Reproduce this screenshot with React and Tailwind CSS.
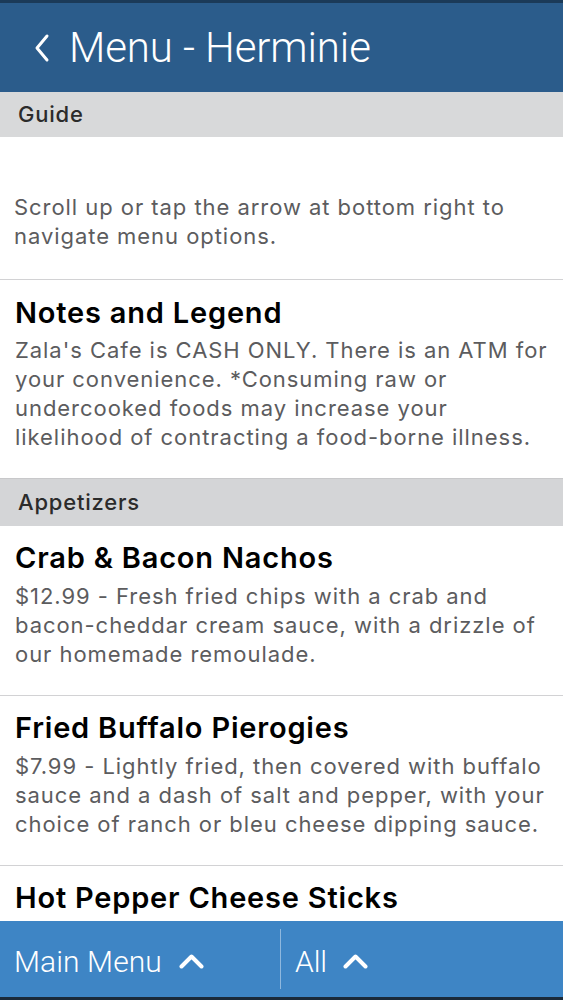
import React from "react";

const Lines = ({ lines, className }) => (
  <div className={className}>
    {lines.map((l, i) => (
      <div key={i} className="whitespace-nowrap">{l}</div>
    ))}
  </div>
);

const Title = ({ children }) => (
  <div className="text-[29px] leading-[34px] font-semibold text-black tracking-[0.8px]">{children}</div>
);

const bodyCls = "text-[22px] leading-[29px] text-[#5c5c5e] tracking-[0.95px]";

const Item = ({ title, lines, last }) => (
  <div className={`px-[15px] pt-[15px] ${last ? "" : "pb-[26px] border-b border-[#d2d2d4]"}`}>
    <Title>{title}</Title>
    {lines && <Lines lines={lines} className={`mt-[7px] ${bodyCls}`} />}
  </div>
);

const Chevron = () => (
  <svg width="25" height="15" viewBox="0 0 25 15" fill="none">
    <path d="M2.5 12.5 L12.5 2.5 L22.5 12.5" stroke="white" strokeWidth="4" strokeLinecap="round" strokeLinejoin="round" />
  </svg>
);

export default function App() {
  return (
    <div className="w-[563px] h-[1000px] flex flex-col bg-white overflow-hidden" style={{ fontFamily: "Inter, Roboto, 'Liberation Sans', sans-serif" }}>
      <div className="h-[92px] shrink-0 bg-[#2b5c8b] border-t-[3px] border-[#1b3a58] flex items-center pl-[33px] pt-[1px]">
        <svg width="18" height="30" viewBox="0 0 18 30" fill="none" className="mr-[18px]">
          <path d="M14 3 L4 15 L14 27" stroke="white" strokeWidth="3" strokeLinecap="round" strokeLinejoin="round" />
        </svg>
        <span className="text-white text-[42px] font-light leading-none tracking-[-0.1px]" style={{ fontFamily: "Roboto, 'Liberation Sans', sans-serif" }}>Menu - Herminie</span>
      </div>
      <div className="flex-1 overflow-hidden">
        <div className="h-[45px] bg-[#d8d9da] flex items-center px-[18px] text-[22px] font-medium text-[#2b2b2b] tracking-[0.8px]">Guide</div>
        <div className="h-[143px] border-b border-[#d2d2d4] px-[14px] pt-[56px]">
          <Lines lines={["Scroll up or tap the arrow at bottom right to", "navigate menu options."]} className={bodyCls} />
        </div>
        <div className="h-[198px] px-[15px] pt-[16px]">
          <Title>Notes and Legend</Title>
          <Lines
            lines={[
              "Zala's Cafe is CASH ONLY. There is an ATM for",
              "your convenience. *Consuming raw or",
              "undercooked foods may increase your",
              "likelihood of contracting a food-borne illness.",
            ]}
            className={`mt-[6px] ${bodyCls}`}
          />
        </div>
        <div className="h-[48px] bg-[#d4d5d7] border-t border-[#c8c8ca] flex items-center px-[18px] text-[22px] font-medium text-[#2b2b2b] tracking-[0.8px]">Appetizers</div>
        <Item
          title="Crab & Bacon Nachos"
          lines={[
            "$12.99 - Fresh fried chips with a crab and",
            "bacon-cheddar cream sauce, with a drizzle of",
            "our homemade remoulade.",
          ]}
        />
        <Item
          title="Fried Buffalo Pierogies"
          lines={[
            "$7.99 - Lightly fried, then covered with buffalo",
            "sauce and a dash of salt and pepper, with your",
            "choice of ranch or bleu cheese dipping sauce.",
          ]}
        />
        <Item title="Hot Pepper Cheese Sticks" last />
      </div>
      <div className="h-[79px] shrink-0 bg-[#3e85c5] border-b-[3px] border-[#1a2a3a] flex items-center text-white" style={{ fontFamily: "Roboto, 'Liberation Sans', sans-serif" }}>
        <div className="w-[280px] flex items-center pl-[14px] pt-[5px] gap-[17px]">
          <span className="text-[30px] font-light tracking-[0.1px] leading-none">Main Menu</span>
          <Chevron />
        </div>
        <div className="w-px h-[60px] bg-[#8fb8de]" />
        <div className="flex items-center pl-[14px] pt-[5px] gap-[16px]">
          <span className="text-[30px] font-light tracking-[-0.1px] leading-none">All</span>
          <Chevron />
        </div>
      </div>
    </div>
  );
}
